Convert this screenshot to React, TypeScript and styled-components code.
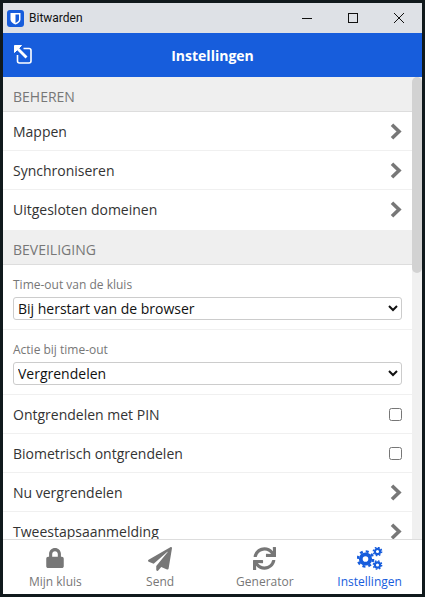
import React from 'react'
import styled, { createGlobalStyle } from 'styled-components'
import { FaLock, FaPaperPlane, FaSync } from 'react-icons/fa'

const GlobalStyle = createGlobalStyle`
  html, body {
    margin: 0;
    padding: 0;
    height: 100%;
    overflow: hidden;
  }
  * {
    box-sizing: border-box;
  }
`

const Frame = styled.div`
  width: 425px;
  height: 597px;
  padding: 3px;
  background: #10191c;
  display: flex;
  flex-direction: column;
  font-family: 'Open Sans', sans-serif;
  color: #333;
`

const TitleBar = styled.div`
  height: 30px;
  flex: none;
  display: flex;
  align-items: center;
  background: #dee1e6;
  padding-left: 4px;
`

const AppName = styled.span`
  margin-left: 5px;
  flex: 1;
  font-family: Roboto, sans-serif;
  font-size: 12px;
  color: #111;
`

const WinButton = styled.div`
  width: 46px;
  height: 30px;
  display: flex;
  align-items: center;
  justify-content: center;
`

const Header = styled.header`
  height: 44px;
  flex: none;
  background: #175ddc;
  display: flex;
  align-items: center;
  justify-content: center;
  position: relative;
  color: #fff;
  font-size: 14px;
  font-weight: 700;
`

const PopOut = styled.div`
  position: absolute;
  left: 10px;
  top: 11px;
  display: flex;
`

const Body = styled.div`
  flex: 1;
  min-height: 0;
  display: flex;
  background: #fff;
`

const Content = styled.main`
  flex: 1;
  min-width: 0;
  overflow: hidden;
`

const ScrollTrack = styled.div`
  width: 10px;
  flex: none;
  background: #f0f0f0;
`

const ScrollThumb = styled.div`
  height: 196px;
  background: #d2d2d2;
  border-radius: 5px;
`

const SectionTitle = styled.h2`
  margin: 0;
  height: 35px;
  padding: 4px 0 0 10px;
  display: flex;
  align-items: center;
  background: #efefef;
  border-bottom: 1px solid #ddd;
  font-size: 14px;
  font-weight: 400;
  color: #777;
`

const Row = styled.div`
  height: 39px;
  padding: 0 10px;
  display: flex;
  align-items: center;
  justify-content: space-between;
  border-bottom: 1px solid #f0f0f0;
  font-size: 14px;
  color: #333;

  &:last-child {
    height: 40px;
    padding-bottom: 2px;
    border-bottom: none;
  }
`

const SelectRow = styled.div`
  height: 65px;
  padding: 12px 10px 0;
  border-bottom: 1px solid #f0f0f0;
`

const SelectLabel = styled.label`
  display: block;
  height: 20px;
  line-height: 15px;
  font-size: 12px;
  color: #777;
`

const Select = styled.select`
  display: block;
  width: 389px;
  height: 23px;
  padding: 0;
  background: #fff;
  border: 1px solid #ccc;
  border-radius: 3px;
  font-family: 'Open Sans', sans-serif;
  font-size: 14px;
  color: #111;
`

const Check = styled.input`
  width: 13px;
  height: 13px;
  margin: 0;
`

const TabBar = styled.nav`
  height: 55px;
  flex: none;
  display: flex;
  background: #fff;
  border-top: 1px solid #ddd;
`

const Tab = styled.div<{ $active?: boolean }>`
  flex: 1;
  display: flex;
  flex-direction: column;
  align-items: center;
  font-size: 12px;
  color: ${p => (p.$active ? '#175ddc' : '#777')};
`

const TabIcon = styled.div`
  height: 33px;
  padding-top: 7px;
  display: flex;
  align-items: flex-start;
  justify-content: center;
`

const LockIcon = styled(FaLock)`
  width: 18px;
  height: 20px;
  margin-top: 1px;
`

const PlaneIcon = styled(FaPaperPlane)`
  width: 24px;
  height: 24px;
`

const SyncIcon = styled(FaSync)`
  width: 23px;
  height: 23px;
`

function Chevron() {
  return (
    <svg width="12" height="17" viewBox="0 0 12 17" fill="none">
      <path d="M2 1.800l7 6.700-7 6.700" stroke="#777" strokeWidth="3.600" />
    </svg>
  )
}

function Cog({ x, y, r }: { x: number; y: number; r: number }) {
  const teeth = 2 * Math.PI * r / 16
  return (
    <g fill="none" stroke="#175ddc">
      <circle cx={x} cy={y} r={r * 0.62} strokeWidth={r * 0.5} />
      <circle cx={x} cy={y} r={r} strokeWidth={r * 0.32} strokeDasharray={`${teeth} ${teeth}`} />
    </g>
  )
}

function CogsIcon() {
  return (
    <svg width="26" height="24" viewBox="0 0 26 24">
      <Cog x={8.500} y={12} r={7.600} />
      <Cog x={20.500} y={4.500} r={4.200} />
      <Cog x={20.500} y={18} r={4.200} />
    </svg>
  )
}

const settings = ['Mappen', 'Synchroniseren', 'Uitgesloten domeinen']
const security = [
  { label: 'Ontgrendelen met PIN', check: true },
  { label: 'Biometrisch ontgrendelen', check: true },
  { label: 'Nu vergrendelen' },
  { label: 'Tweestapsaanmelding' },
]

function App() {
  return (
    <>
      <GlobalStyle />
      <Frame>
        <TitleBar>
          <svg width="17" height="17" viewBox="0 0 17 17">
            <rect width="17" height="17" rx="3" fill="#175ddc" />
            <path d="M3.500 3h10v6.500c0 2.500-2.500 4-5 5-2.500-1-5-2.500-5-5z" fill="#fff" />
            <path d="M8.500 4.500h3.500v5c0 1.500-1.800 2.600-3.500 3.400z" fill="#175ddc" />
          </svg>
          <AppName>Bitwarden</AppName>
          <WinButton>
            <svg width="10" height="10" viewBox="0 0 10 10">
              <path d="M0 5.500h10" stroke="#111" strokeWidth="1" />
            </svg>
          </WinButton>
          <WinButton>
            <svg width="10" height="10" viewBox="0 0 10 10">
              <rect x=".5" y=".5" width="9" height="9" fill="none" stroke="#111" />
            </svg>
          </WinButton>
          <WinButton>
            <svg width="10" height="10" viewBox="0 0 10 10">
              <path d="M0 0l10 10M10 0L0 10" stroke="#111" strokeWidth="1" />
            </svg>
          </WinButton>
        </TitleBar>
        <Header>
          Instellingen
          <PopOut>
            <svg width="20" height="22" viewBox="0 0 20 22" fill="none" stroke="#fff">
              <path d="M10.500 4.500h5.500a2 2 0 0 1 2 2V17a2 2 0 0 1-2 2H6.500a2 2 0 0 1-2-2v-6" strokeWidth="1.600" />
              <path d="M3.500 3.500l10 10" strokeWidth="2.800" />
              <path d="M1.500 1.500h7l-7 7z" fill="#fff" strokeWidth="1" />
            </svg>
          </PopOut>
        </Header>
        <Body>
          <Content>
            <SectionTitle>BEHEREN</SectionTitle>
            <div>
              {settings.map(s => (
                <Row key={s}>
                  {s}
                  <Chevron />
                </Row>
              ))}
            </div>
            <SectionTitle>BEVEILIGING</SectionTitle>
            <SelectRow>
              <SelectLabel>Time-out van de kluis</SelectLabel>
              <Select defaultValue="restart">
                <option value="restart">Bij herstart van de browser</option>
                <option value="never">Nooit</option>
              </Select>
            </SelectRow>
            <SelectRow>
              <SelectLabel>Actie bij time-out</SelectLabel>
              <Select defaultValue="lock">
                <option value="lock">Vergrendelen</option>
                <option value="logout">Uitloggen</option>
              </Select>
            </SelectRow>
            <div>
              {security.map(r => (
                <Row key={r.label}>
                  {r.label}
                  {r.check ? <Check type="checkbox" /> : <Chevron />}
                </Row>
              ))}
            </div>
          </Content>
          <ScrollTrack>
            <ScrollThumb />
          </ScrollTrack>
        </Body>
        <TabBar>
          <Tab>
            <TabIcon><LockIcon /></TabIcon>
            Mijn kluis
          </Tab>
          <Tab>
            <TabIcon><PlaneIcon /></TabIcon>
            Send
          </Tab>
          <Tab>
            <TabIcon><SyncIcon /></TabIcon>
            Generator
          </Tab>
          <Tab $active>
            <TabIcon><CogsIcon /></TabIcon>
            Instellingen
          </Tab>
        </TabBar>
      </Frame>
    </>
  )
}

export default App
